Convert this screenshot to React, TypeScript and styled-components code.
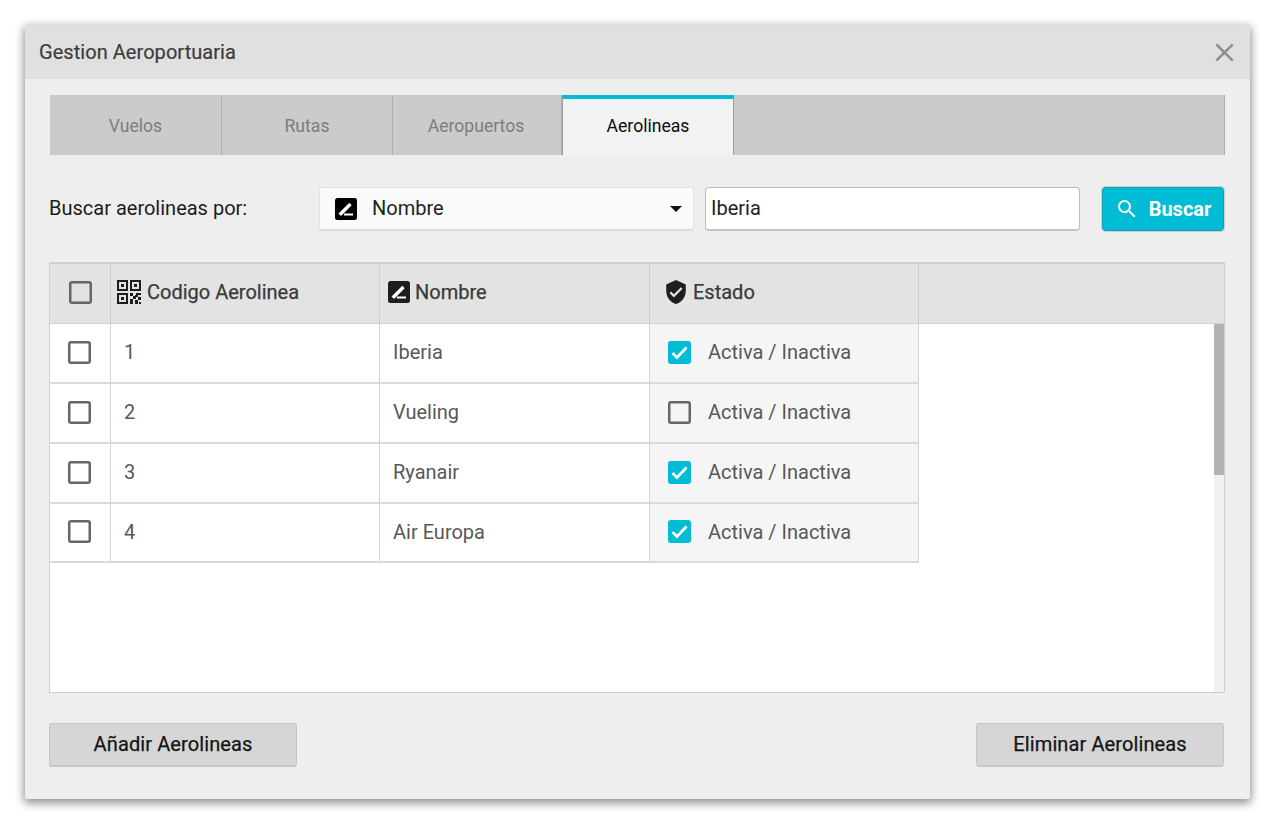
import React from "react";
import styled, { createGlobalStyle } from "styled-components";
import { MdClose, MdSearch, MdVerifiedUser } from "react-icons/md";

const Global = createGlobalStyle`
  html, body { margin: 0; padding: 0; background: #fff; }
  body { font-family: Roboto, "Liberation Sans", sans-serif; }
  * { box-sizing: border-box; }
`;

const Page = styled.div`
  width: 1278px;
  height: 828px;
  padding: 25px 28px 29px 25px;
`;

const Dialog = styled.section`
  width: 1225px;
  height: 774px;
  background: #eeeeee;
  border-radius: 2px;
  box-shadow: 0 3px 10px 1px rgba(0, 0, 0, 0.45);
  display: flex;
  flex-direction: column;
  overflow: hidden;
`;

const TitleBar = styled.header`
  height: 54px;
  flex: none;
  background: #e0e0e0;
  display: flex;
  align-items: center;
  justify-content: space-between;
  padding: 0 14px;
  color: #3c3c3c;
  font-size: 20px;
  font-weight: 400;
  letter-spacing: 0.05px;
  -webkit-text-stroke: 0.2px #3c3c3c;
`;

const CloseIcon = styled(MdClose)`
  width: 31px;
  height: 31px;
  color: #8e8e8e;
  margin-right: -4px;
`;

const Body = styled.div`
  flex: 1;
  display: flex;
  flex-direction: column;
  padding: 16px 25px 32px 24px;
`;

const Tabs = styled.nav`
  height: 60px;
  margin-left: 1px;
  flex: none;
  display: flex;
  background: #cbcbcb;
  border-right: 1px solid #aeaeae;
`;

const Tab = styled.div<{ $w: number; $active?: boolean; $nudge?: number }>`
  width: ${(p) => p.$w}px;
  display: flex;
  align-items: center;
  justify-content: center;
  font-size: 17.6px;
  color: ${(p) => (p.$active ? "#0c0c0c" : "#7d7d7d")};
  background: ${(p) => (p.$active ? "#f2f2f2" : "transparent")};
  border-right: 1px solid ${(p) => (p.$active ? "#9e9e9e" : "#aeaeae")};
  border-left: ${(p) => (p.$active ? "1px solid #9e9e9e" : "none")};
  border-top: ${(p) => (p.$active ? "4px solid #00bcd4" : "none")};
  padding: ${(p) => (p.$active ? "0 0 2px" : `2px ${p.$nudge ?? 0}px 0 0`)};
`;

const SearchRow = styled.div`
  margin-top: 32px;
  height: 44px;
  flex: none;
  display: flex;
  align-items: stretch;
`;

const SearchLabel = styled.label`
  width: 270px;
  display: flex;
  align-items: center;
  padding-bottom: 2px;
  font-size: 20px;
  color: #1c1c1c;
`;

const Select = styled.div`
  width: 375px;
  background: #fafafa;
  border: 1px solid #e2e2e2;
  border-bottom: 2px solid #dcdcdc;
  border-radius: 3px;
  display: flex;
  align-items: center;
  padding-left: 15px;
  font-size: 20px;
  color: #222;
`;

const SelectText = styled.span`
  flex: 1;
  margin-left: 15px;
  padding-bottom: 2px;
`;

const Caret = styled.span`
  width: 0;
  height: 0;
  border-left: 6px solid transparent;
  border-right: 6px solid transparent;
  border-top: 6px solid #111;
  margin-right: 11px;
`;

const SearchInput = styled.input`
  width: 375px;
  margin-left: 11px;
  background: #fff;
  border: 1px solid #bdbdbd;
  border-bottom: 2px solid #c4c4c4;
  border-radius: 4px;
  padding: 0 5px 2px;
  font: 400 20px Roboto, sans-serif;
  color: #222;
  outline: none;
`;

const SearchButton = styled.button`
  width: 122px;
  margin-left: 22px;
  background: #00bcd4;
  border: 1px solid #0aa3b7;
  outline: 1px solid #cfcfcf;
  border-radius: 3px;
  color: #fff;
  font: 700 20px Roboto, sans-serif;
  display: flex;
  align-items: center;
  justify-content: center;
  gap: 10px;
  padding: 0 0 1px;
`;

const SearchIcon = styled(MdSearch)`
  width: 24px;
  height: 24px;
`;

const Table = styled.div`
  margin-top: 31px;
  flex: 1;
  min-height: 0;
  background: #fff;
  border: 1px solid #cfcfcf;
  border-top-width: 2px;
  display: flex;
  flex-direction: column;
`;

const gridCols = "61px 269px 270px 269px";

const HeaderRow = styled.div`
  height: 60px;
  flex: none;
  display: grid;
  grid-template-columns: ${gridCols} 1fr;
  background: #e3e3e3;
  border-bottom: 1px solid #d2d2d2;
`;

const HeaderCell = styled.div<{ $center?: boolean; $last?: boolean; $pad?: number }>`
  display: flex;
  align-items: center;
  justify-content: ${(p) => (p.$center ? "center" : "flex-start")};
  padding: 0 0 3px ${(p) => p.$pad ?? 0}px;
  gap: 5px;
  border-right: ${(p) => (p.$last ? "none" : "1px solid #cfcfcf")};
  font-size: 20px;
  font-weight: 400;
  color: #3a3a3a;
  -webkit-text-stroke: 0.25px #3a3a3a;
`;

const TableBody = styled.div`
  flex: 1;
  min-height: 0;
  display: flex;
`;

const Rows = styled.div`
  flex: 1;
`;

const Scrollbar = styled.div`
  width: 10px;
  flex: none;
  background: #f1f1f1;
`;

const ScrollThumb = styled.div`
  height: 151px;
  background: #b2b2b2;
`;

const Row = styled.div`
  height: 60px;
  display: grid;
  grid-template-columns: ${gridCols};
  &:last-child { height: 59px; }
`;

const Cell = styled.div<{ $kind?: "check" | "state" }>`
  display: flex;
  align-items: center;
  justify-content: ${(p) => (p.$kind === "check" ? "center" : "flex-start")};
  padding: 0 ${(p) => (p.$kind === "check" ? "1px" : "0")} 2px ${(p) => (p.$kind === "check" ? "0" : p.$kind === "state" ? "18px" : "13px")};
  background: ${(p) => (p.$kind === "state" ? "#f5f5f5" : "#fff")};
  border-right: 1px solid #d2d2d2;
  border-bottom: 2px solid #dadada;
  font-size: 20px;
  color: #585858;
`;

const Box = styled.span<{ $checked?: boolean }>`
  width: 23px;
  height: 23px;
  flex: none;
  border-radius: 3px;
  display: inline-flex;
  align-items: center;
  justify-content: center;
  background: ${(p) => (p.$checked ? "#00bcd4" : "transparent")};
  box-shadow: ${(p) => (p.$checked ? "none" : "inset 0 0 0 2.5px #666666")};
`;

const StateText = styled.span`
  margin-left: 17px;
`;

const Footer = styled.div`
  margin-top: 30px;
  height: 44px;
  flex: none;
  display: flex;
  justify-content: space-between;
  padding-right: 1px;
`;

const FooterButton = styled.button`
  width: 248px;
  background: #d6d6d6;
  border: 1px solid #c6c6c6;
  border-bottom-width: 2px;
  border-radius: 3px;
  font: 400 20px Roboto, sans-serif;
  letter-spacing: 0.1px;
  -webkit-text-stroke: 0.25px #141414;
  color: #141414;
  padding: 0 0 1px;
`;

const RenameIcon = ({ color = "#000", size = 22 }: { color?: string; size?: number }) => (
  <svg width={size} height={size} viewBox="0 0 22 22" aria-hidden="true">
    <rect x="0" y="0" width="22" height="22" rx="2.5" fill={color} />
    <path d="M4.8 16.8 15.5 6" fill="none" stroke="#fff" strokeWidth="3.4" />
    <rect x="9" y="15.5" width="9" height="2" fill="#fff" />
  </svg>
);

const QrIcon = () => (
  <svg width="25" height="25" viewBox="0 0 25 25" aria-hidden="true" fill="#1e1e1e">
    <path fillRule="evenodd" d="M0 0h11v11H0ZM2 2v7h7V2Z" />
    <rect x="4" y="4" width="3" height="3" />
    <path fillRule="evenodd" d="M13 0h11v11H13ZM15 2v7h7V2Z" />
    <rect x="17" y="4" width="3" height="3" />
    <path fillRule="evenodd" d="M0 13h11v11H0ZM2 15v7h7v-7Z" />
    <rect x="4" y="17" width="3" height="3" />
    <path d="M13 13h3v3h-3ZM19 13h5v2h-3v2h-3v-2h1ZM16 16h3v3h-3ZM21 17h3v3h-3ZM13 19h3v5h-3ZM18 20h3v4h-3ZM22 22h2v2h-2Z" />
  </svg>
);

const CheckGlyph = () => (
  <svg width="23" height="23" viewBox="0 0 23 23" aria-hidden="true">
    <path d="M4.5 12 9 16.5 18.5 6.5" fill="none" stroke="#fff" strokeWidth="2.8" />
  </svg>
);

const ShieldIcon = styled(MdVerifiedUser)`
  width: 26px;
  height: 26px;
  color: #1e1e1e;
  margin-right: -1px;
`;

const data = [
  { id: 1, name: "Iberia", active: true },
  { id: 2, name: "Vueling", active: false },
  { id: 3, name: "Ryanair", active: true },
  { id: 4, name: "Air Europa", active: true },
];

export default function App() {
  return (
    <Page>
      <Global />
      <Dialog>
        <TitleBar>
          <span>Gestion Aeroportuaria</span>
          <CloseIcon />
        </TitleBar>
        <Body>
          <Tabs>
            <Tab $w={172}>Vuelos</Tab>
            <Tab $w={171}>Rutas</Tab>
            <Tab $w={169} $nudge={2}>Aeropuertos</Tab>
            <Tab $w={172} $active>Aerolineas</Tab>
          </Tabs>
          <SearchRow>
            <SearchLabel>Buscar aerolineas por:</SearchLabel>
            <Select>
              <RenameIcon />
              <SelectText>Nombre</SelectText>
              <Caret />
            </Select>
            <SearchInput defaultValue="Iberia" />
            <SearchButton>
              <SearchIcon />
              Buscar
            </SearchButton>
          </SearchRow>
          <Table>
            <HeaderRow>
              <HeaderCell $center><Box /></HeaderCell>
              <HeaderCell $pad={6}><QrIcon />Codigo Aerolinea</HeaderCell>
              <HeaderCell $pad={8}><RenameIcon color="#1e1e1e" />Nombre</HeaderCell>
              <HeaderCell $pad={13}><ShieldIcon />Estado</HeaderCell>
              <HeaderCell $last />
            </HeaderRow>
            <TableBody>
              <Rows>
                {data.map((r) => (
                  <Row key={r.id}>
                    <Cell $kind="check"><Box /></Cell>
                    <Cell>{r.id}</Cell>
                    <Cell>{r.name}</Cell>
                    <Cell $kind="state">
                      <Box $checked={r.active}>{r.active && <CheckGlyph />}</Box>
                      <StateText>Activa / Inactiva</StateText>
                    </Cell>
                  </Row>
                ))}
              </Rows>
              <Scrollbar><ScrollThumb /></Scrollbar>
            </TableBody>
          </Table>
          <Footer>
            <FooterButton>Añadir Aerolineas</FooterButton>
            <FooterButton>Eliminar Aerolineas</FooterButton>
          </Footer>
        </Body>
      </Dialog>
    </Page>
  );
}
